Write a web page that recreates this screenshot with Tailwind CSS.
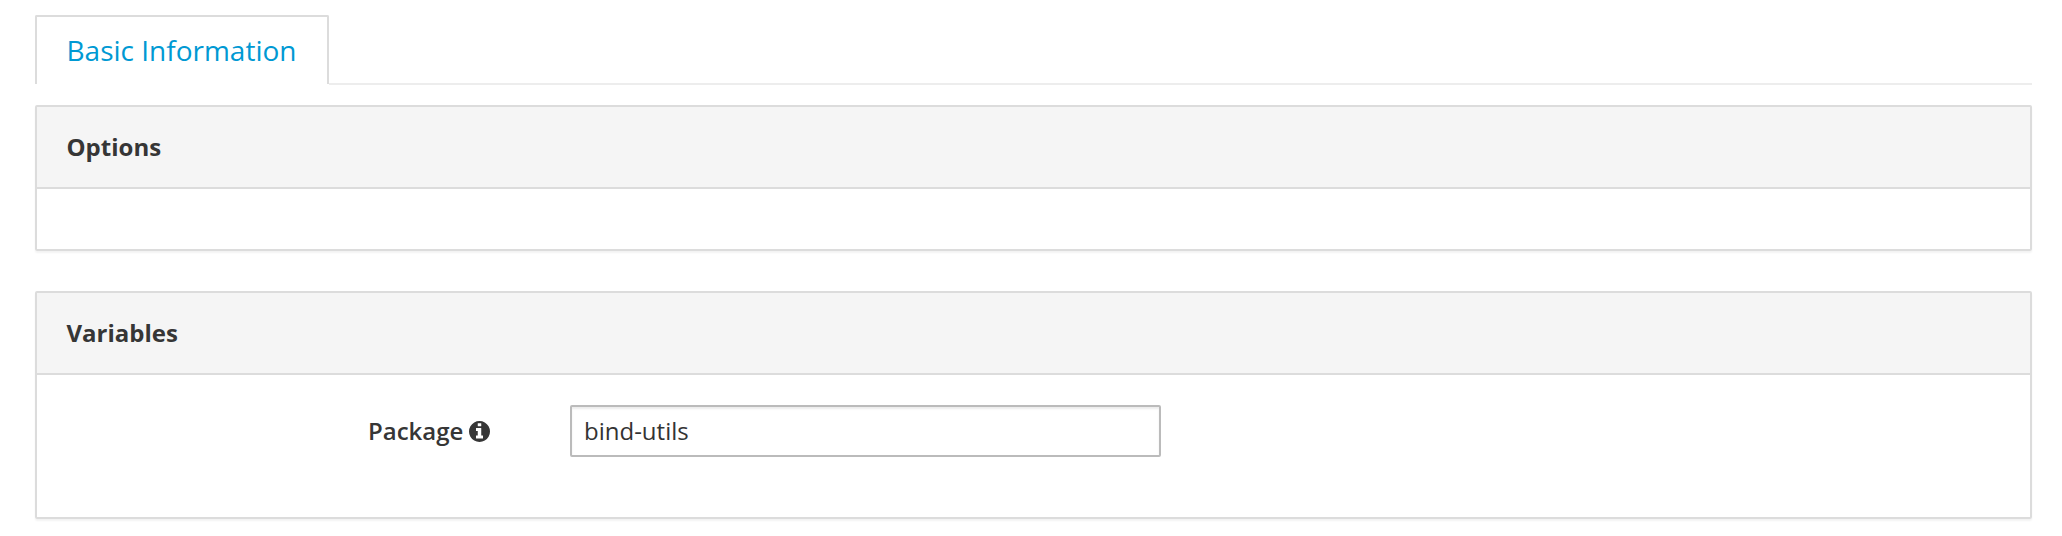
<!DOCTYPE html>
<html lang="en">
<head>
<meta charset="utf-8">
<title>Basic Information</title>
<script src="https://cdn.jsdelivr.net/npm/@tailwindcss/browser@4"></script>
</head>
<body class="bg-white font-['Open_Sans',sans-serif] text-[#363636]">
<main class="flex h-[536px] w-[2062px] flex-col pt-[15px] pr-[30px] pl-[35px]">
  <nav class="flex h-[70px] items-end">
    <a class="h-[69px] w-[294px] self-start rounded-t-[2px] border-2 border-b-0 border-[#dcdcdc] pl-[29.5px] text-[28px] leading-[66px] whitespace-nowrap text-[#0099d3]">Basic Information</a>
    <span class="h-[2px] flex-1 bg-[#ededed]"></span>
  </nav>
  <section class="mt-5 h-[146px] rounded-[2px] border-2 border-[#dcdcdc] shadow-[0_2px_2px_rgba(0,0,0,0.05)]">
    <h2 class="h-[82px] border-b-2 border-[#dcdcdc] bg-[#f5f5f5] pl-[29.5px] text-2xl leading-[80px] font-bold">Options</h2>
  </section>
  <section class="mt-10 h-[228px] rounded-[2px] border-2 border-[#dcdcdc] shadow-[0_2px_2px_rgba(0,0,0,0.05)]">
    <h2 class="h-[82px] border-b-2 border-[#dcdcdc] bg-[#f5f5f5] pl-[29.5px] text-2xl leading-[80px] font-bold">Variables</h2>
    <div class="flex items-center pt-[30px]">
      <label for="package" class="flex w-[533px] items-center pl-[331px] text-2xl leading-[52px] font-semibold">Package
        <svg class="ml-[6px] size-[21px]" viewBox="128 128 1536 1536" fill="#363636"><path d="M1152 1376v-160q0-14-9-23t-23-9h-96v-512q0-14-9-23t-23-9H672q-14 0-23 9t-9 23v160q0 14 9 23t23 9h96v320h-96q-14 0-23 9t-9 23v160q0 14 9 23t23 9h448q14 0 23-9t9-23zm-128-896V320q0-14-9-23t-23-9H800q-14 0-23 9t-9 23v160q0 14 9 23t23 9h192q14 0 23-9t9-23zm640 416q0 209-103 385.500T1281.500 1561 896 1664t-385.500-103T231 1281.500 128 896t103-385.500T510.500 231 896 128t385.500 103T1561 510.500 1664 896z"/></svg>
      </label>
      <input id="package" type="text" value="bind-utils" class="h-[52px] w-[591px] rounded-[2px] border-2 border-[#bbb] px-3 pb-[2px] text-2xl text-[#333] shadow-[inset_0_2px_2px_rgba(0,0,0,0.075)] outline-none">
    </div>
  </section>
</main>
</body>
</html>
